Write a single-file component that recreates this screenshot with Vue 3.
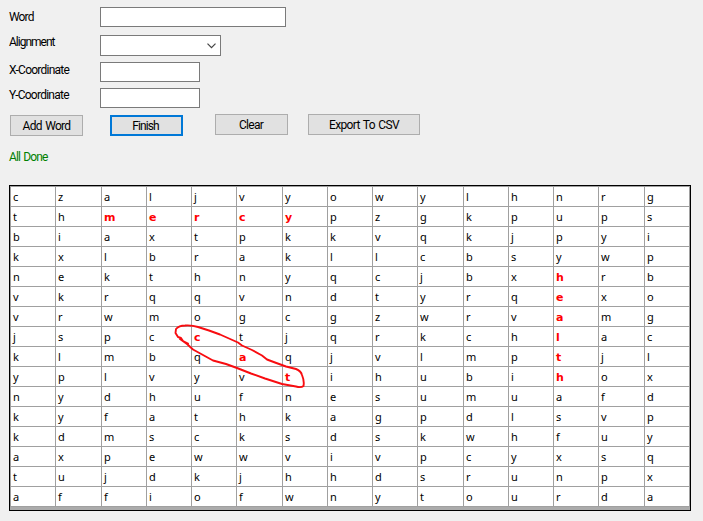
<script setup>
import { ref } from 'vue'

const word = ref('')
const x = ref('')
const y = ref('')

const rows = [
  'czaljvyowylhnrg',
  'thmercypzgkpups',
  'biaxtpkkvqkjpyi',
  'kxlbrakllcbsywp',
  'nekthnyqcjbxhrb',
  'vkrqqvndtyrqexo',
  'vrwmogcgzwrvamg',
  'jspcctjqrkchlac',
  'klmbqaqjvlmptjl',
  'yplvyvtihubihox',
  'nydhufnesumuafd',
  'kyfathkagpdlsvp',
  'kdmscksdskwhfuy',
  'axpewwvivpcyxsq',
  'tujdkjhhdsrunpx',
  'affiofwnytourda',
].map((r) => r.split(''))

const found = new Set([
  '1-2', '1-3', '1-4', '1-5', '1-6',
  '4-12', '5-12', '6-12', '7-12', '8-12', '9-12',
  '7-4', '8-5', '9-6',
])
</script>

<template>
  <main class="form">
    <div class="fields">
      <label class="row word"><span>Word</span><input v-model="word" /></label>
      <div class="row align">
        <span>Alignment</span>
        <div class="combo">
          <svg width="9" height="6" viewBox="0 0 9 6"><path d="M0.5 0.7 L4.5 4.7 L8.5 0.7" /></svg>
        </div>
      </div>
      <label class="row xc"><span>X-Coordinate</span><input v-model="x" /></label>
      <label class="row yc"><span>Y-Coordinate</span><input v-model="y" /></label>
    </div>
    <div class="buttons">
      <button class="add">Add Word</button>
      <button class="finish">Finish</button>
      <button class="clear">Clear</button>
      <button class="export">Export To CSV</button>
    </div>
    <p class="status">All Done</p>
    <div class="board">
      <div class="grid">
        <template v-for="(r, i) in rows" :key="i">
          <div v-for="(c, j) in r" :key="j" class="cell" :class="{ hit: found.has(i + '-' + j) }">{{ c }}</div>
        </template>
      </div>
      <svg class="loop" width="150" height="80" viewBox="165 315 150 80">
        <path d="M188 343.5 L183 341 L181 338 L178 337 L175.5 333 L176 329 Q179 325.5 185 325.5 Q192 325 198 327 L209 330.5 L220 334.5 L229 338.5 L238 342.5 L242 345.5 L252 350 L262 355.5 L267 359.5 L275 362.5 L286 366.5 L296 369 Q301 371 302 375 Q304.5 381 303.5 386 Q301 388 296 386.5 L282 384 L265 378.5 L251 373.5 L237 368 L226 364 L213 360.5 L203 355 L193 349.5 L187 344 L180 339" />
      </svg>
    </div>
  </main>
</template>

<style>
body {
  margin: 0;
  background: #f0f0f0;
}
</style>

<style scoped>
.form {
  box-sizing: border-box;
  width: 703px;
  height: 521px;
  padding: 7px 0 0 9px;
  overflow: hidden;
  background: #f0f0f0;
  color: #000;
  font: 12px/14px Roboto, "Liberation Sans", sans-serif;
}
.fields {
  display: flex;
  flex-direction: column;
  height: 106px;
}
.row {
  display: grid;
  grid-template-columns: 91px auto;
  justify-content: start;
  align-items: start;
}
.row span { white-space: nowrap; }
.word { height: 28px; letter-spacing: -0.85px; }
.word span { padding-top: 3px; }
.align { height: 27px; letter-spacing: -1px; }
.xc { height: 26px; letter-spacing: -0.75px; }
.yc { height: 20px; letter-spacing: -0.75px; }
.xc span { padding-top: 1px; }
input, .combo {
  box-sizing: border-box;
  width: 100px;
  height: 20px;
  margin: 0;
  padding: 2px;
  border: 1px solid #7a7a7a;
  border-radius: 0;
  background: #fff;
  outline: none;
  font: inherit;
}
.word input { width: 186px; }
.combo {
  display: flex;
  justify-content: flex-end;
  width: 121px;
  height: 21px;
  padding: 7px 4px 0 0;
}
.combo path { fill: none; stroke: #444; stroke-width: 1.2; }
.buttons {
  display: flex;
  align-items: flex-start;
  padding-left: 1px;
  height: 37px;
}
button {
  box-sizing: border-box;
  width: 73px;
  height: 21px;
  margin: 0;
  padding: 0;
  border: 1px solid #adadad;
  border-radius: 0;
  background: #e1e1e1;
  color: #000;
  font: inherit;
  letter-spacing: -0.7px;
  word-spacing: 1px;
  white-space: nowrap;
}
.add { margin-top: 2px; margin-right: 27px; }
.finish { margin-top: 2px; margin-right: 32px; padding-right: 2px; border: 2px solid #0078d7; letter-spacing: -0.9px; }
.clear { margin-top: 1px; margin-right: 20px; padding-right: 1px; }
.export { margin-top: 1px; width: 112px; letter-spacing: -0.65px; }
.status {
  margin: 0;
  height: 35px;
  color: #008000;
  letter-spacing: -0.85px;
  word-spacing: 1px;
}
.board {
  position: relative;
  box-sizing: border-box;
  width: 682px;
  height: 326px;
  border: 1px solid #000;
  background: #ababab;
}
.grid {
  display: grid;
  grid-template-columns: 45px 46px 45px 45px 45px 46px 45px 45px 45px 46px 45px 45px 45px 46px 45px;
  grid-template-rows: repeat(16, 20px);
  border-top: 1px solid #a0a0a0;
  border-left: 1px solid #a0a0a0;
}
.cell {
  box-sizing: border-box;
  border-right: 1px solid #a0a0a0;
  border-bottom: 1px solid #a0a0a0;
  padding-left: 2px;
  background: #fff;
  font: 11px/20px "Noto Sans", "DejaVu Sans", sans-serif;
}
.hit {
  padding-top: 1px;
  color: #f00;
  font-family: "DejaVu Sans", sans-serif;
  font-weight: bold;
  line-height: 19px;
}
.loop {
  position: absolute;
  left: 155px;
  top: 129px;
}
.loop path {
  fill: none;
  stroke: #f80c10;
  stroke-width: 1.9;
  stroke-linejoin: round;
  stroke-linecap: round;
}
</style>
